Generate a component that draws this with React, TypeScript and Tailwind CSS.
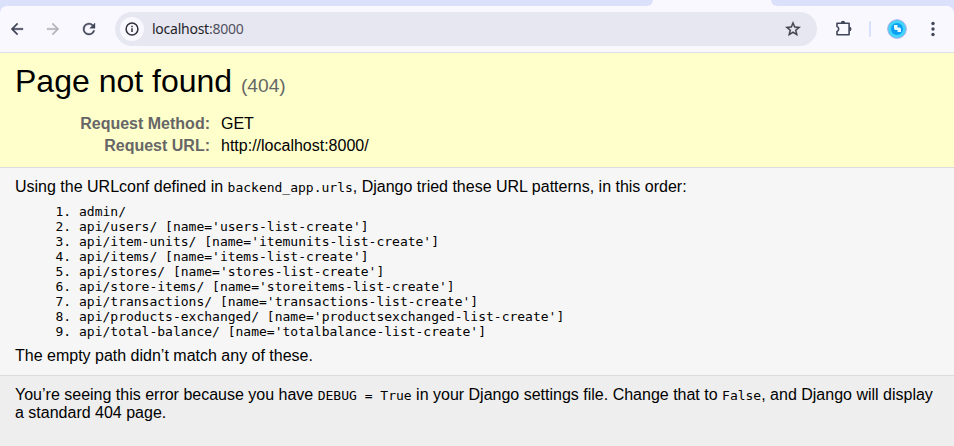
import React from 'react';

const patterns = [
  'admin/',
  "api/users/ [name='users-list-create']",
  "api/item-units/ [name='itemunits-list-create']",
  "api/items/ [name='items-list-create']",
  "api/stores/ [name='stores-list-create']",
  "api/store-items/ [name='storeitems-list-create']",
  "api/transactions/ [name='transactions-list-create']",
  "api/products-exchanged/ [name='productsexchanged-list-create']",
  "api/total-balance/ [name='totalbalance-list-create']",
];

function Code({ children }: { children: React.ReactNode }) {
  return <code className="font-['DejaVu_Sans_Mono',monospace] text-[13px] leading-none">{children}</code>;
}

function Toolbar() {
  return (
    <header className="bg-[#dce1fb]">
      <div className="flex h-1.5">
        <div className="flex-1 bg-[#f9f8ff]">
          <div className="h-1.5 w-[653px] rounded-br-[7px] bg-[#dce1fb]" />
        </div>
        <div className="w-[183px] bg-[#f9f8ff]">
          <div className="h-1.5 rounded-bl-[9px] bg-[#dce1fb]" />
        </div>
      </div>
      <div className="flex h-[47px] items-center rounded-t-[7px] border-b border-[#dfdfea] bg-[#f9f8ff] text-[#414659]">
        <svg className="ml-2 size-[18px] shrink-0" viewBox="0 0 24 24" fill="currentColor" stroke="currentColor" strokeWidth="0.5">
          <path d="M20 11H7.83l5.59-5.59L12 4l-8 8 8 8 1.41-1.41L7.83 13H20z" />
        </svg>
        <svg className="ml-[18px] size-[18px] shrink-0 text-[#b4b4bb]" viewBox="0 0 24 24" fill="currentColor" stroke="currentColor" strokeWidth="0.5">
          <path d="m12 4-1.41 1.41L16.17 11H4v2h12.17l-5.58 5.59L12 20l8-8z" />
        </svg>
        <svg className="ml-[18px] size-[18px] shrink-0" viewBox="0 0 24 24" fill="currentColor" stroke="currentColor" strokeWidth="0.5">
          <path d="M17.65 6.35A7.96 7.96 0 0 0 12 4a8 8 0 1 0 7.73 10h-2.08A6 6 0 1 1 12 6c1.66 0 3.14.69 4.22 1.78L13 11h7V4z" />
        </svg>
        <div className="ml-[17px] flex h-[34px] w-[702px] shrink-0 items-center rounded-full bg-[#e7e7f1]">
          <div className="ml-[5px] flex size-6 items-center justify-center rounded-full bg-[#f9f8ff]">
            <svg className="size-4 text-[#2f303a]" viewBox="0 0 16 16" fill="none" stroke="currentColor" strokeWidth="1.5">
              <circle cx="8" cy="8" r="5.9" />
              <path d="M8 7.2V11M8 4.8v1.5" />
            </svg>
          </div>
          <span className="ml-2 font-['Noto_Sans',sans-serif] text-[14px] leading-5 tracking-[-0.25px] text-[#1e1f28]">
            localhost<span className="text-[#50515e]">:8000</span>
          </span>
          <svg className="ml-auto mr-[15px] size-[18px] text-[#414249]" viewBox="0 0 24 24" fill="currentColor" stroke="currentColor" strokeWidth="0.5">
            <path d="m22 9.24-7.19-.62L12 2 9.19 8.63 2 9.24l5.46 4.73L5.82 21 12 17.27 18.18 21l-1.63-7.03zM12 15.4l-3.76 2.27 1-4.28-3.32-2.88 4.38-.38L12 6.1l1.71 4.04 4.38.38-3.32 2.88 1 4.28z" />
          </svg>
        </div>
        <svg className="ml-[17px] size-5 shrink-0" viewBox="0 0 20 20">
          <path d="M3 4.2H15.1V15.8H3V12.4Q4.7 11.8 4.7 10T3 7.6Z" fill="none" stroke="currentColor" strokeWidth="1.6" strokeLinejoin="round" />
          <path d="M6.8 4a2.2 2.2 0 0 1 4.4 0zM15.3 7.8a2.2 2.2 0 0 1 0 4.4z" fill="currentColor" />
        </svg>
        <div className="ml-[15px] h-4 w-0.5 rounded-full bg-[#d8e1fc]" />
        <svg className="ml-4 size-5 shrink-0" viewBox="0 0 20 20">
          <circle cx="10" cy="10" r="9.3" fill="#43d5fa" stroke="#aaa9e3" />
          <circle cx="10" cy="10" r="6" fill="#0b9ff5" />
          <path d="M7 6h3.5v2.5H13l1 1.5v3h-3.5v-2H8L7 9.5z" fill="#e8fbff" />
        </svg>
        <svg className="ml-4 size-5 shrink-0" viewBox="0 0 20 20" fill="currentColor">
          <circle cx="10" cy="4.5" r="1.7" />
          <circle cx="10" cy="10" r="1.7" />
          <circle cx="10" cy="15.5" r="1.7" />
        </svg>
      </div>
    </header>
  );
}

export default function App() {
  return (
    <div className="flex h-screen flex-col overflow-hidden bg-[#eee] font-['Liberation_Sans',Arial,sans-serif] text-base leading-[18px] text-black">
      <Toolbar />
      <section className="h-[115px] shrink-0 border-b border-[#ddd] bg-[#ffffcc] px-[15px] pt-[10px]">
        <h1 className="text-[32px] leading-9">
          Page not found <small className="text-[19.2px] text-[#666]">(404)</small>
        </h1>
        <dl className="mt-[9px] grid grid-cols-[195px_1fr] gap-x-[11px] leading-[22px]">
          <dt className="text-right font-bold text-[#666]">Request Method:</dt>
          <dd>GET</dd>
          <dt className="text-right font-bold text-[#666]">Request URL:</dt>
          <dd>http://localhost:8000/</dd>
        </dl>
      </section>
      <main className="h-[208px] shrink-0 border-b border-[#ddd] bg-[#f6f6f6] px-[15px] pt-[10px]">
        <p>
          Using the URLconf defined in <Code>backend_app.urls</Code>, Django tried these URL patterns, in this order:
        </p>
        <ol className="mt-2 list-decimal pl-16 font-['DejaVu_Sans_Mono',monospace] text-[13px] leading-[15px]">
          {patterns.map((pattern) => (
            <li key={pattern}>{pattern}</li>
          ))}
        </ol>
        <p className="mt-2">The empty path didn’t match any of these.</p>
      </main>
      <footer className="px-[15px] pt-[10px]">
        <p>
          You’re seeing this error because you have <Code>DEBUG = True</Code> in your Django settings file. Change that to{' '}
          <Code>False</Code>, and Django will display a standard 404 page.
        </p>
      </footer>
    </div>
  );
}
